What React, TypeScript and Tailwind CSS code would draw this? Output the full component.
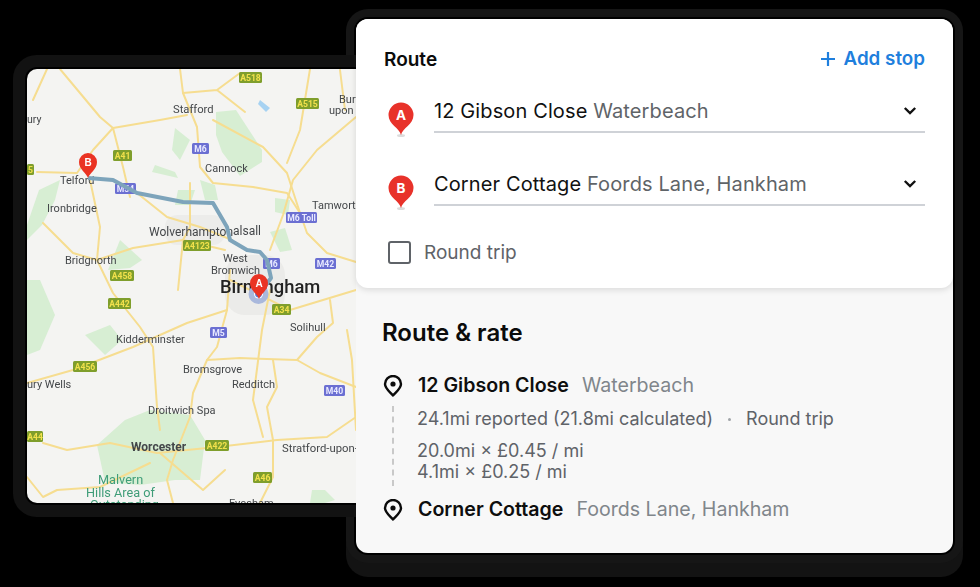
import React from "react";

const roads = [
  "M60 69 L80 93 L100 117 L113 128 L160 120 L187 115",
  "M180 69 L183 93 L197 127 L200 167 L213 183 L253 187 L287 193 L300 213 L307 233 L327 253 L356 262",
  "M37 172 L77 173 L93 150 L113 128 L123 167 L130 197",
  "M137 193 L167 217 L200 227 L232 240",
  "M190 183 L190 227 L183 240 L178 290",
  "M217 90 L240 73 M183 93 L217 90 L245 112 M213 120 L263 147 L287 173 L300 213",
  "M310 69 L300 130 L287 163 M356 117 L317 150 L293 180 L283 215 L270 250",
  "M90 180 L100 227 L97 260 L113 293 L140 327 L153 347 L157 407 L160 430",
  "M43 223 L73 253 L97 260 L133 248 L183 240 L225 250",
  "M27 383 L73 370 L133 347 L187 323 L227 310 L230 270",
  "M207 360 L217 347 L227 310 M207 360 L240 358 L297 360 L320 373 L356 387",
  "M207 360 L193 393 L190 417 L173 460 L167 480 L173 503",
  "M43 443 L67 450 L110 443 L157 453 L217 447 L277 440 L327 437 L356 417",
  "M273 360 L277 387 L267 407 L273 440 L273 477 L260 503",
  "M253 400 L263 437",
  "M330 300 L333 323 L317 337 L297 360",
  "M27 477 L43 497 L57 490 L100 487 L150 463",
  "M230 280 L290 310 L356 290 M270 290 L262 330 L253 400",
  "M340 70 L345 110 M356 430 L352 360 L347 330",
  "M47 69 L33 100 M160 453 L203 490 L225 470",
];

const greens = [
  "M216 112 L236 110 L262 150 L262 162 L240 176 L222 152 L216 135 Z",
  "M120 240 L142 260 L130 268 L108 270 Z",
  "M175 128 L190 140 L180 160 L172 150 Z",
  "M155 165 L175 172 L178 178 L152 172 Z",
  "M27 280 L40 280 L55 315 L40 350 L27 355 Z",
  "M97 445 L125 420 L150 410 L190 415 L205 440 L200 480 L175 480 L140 485 L105 482 Z",
  "M85 335 L110 325 L122 340 L105 355 Z",
  "M39 190 L60 180 L55 200 L42 225 L27 240 L27 225 Z",
  "M178 190 L195 190 L190 205 L175 205 Z",
  "M200 180 L215 185 L218 200 L205 200 Z",
  "M275 198 L290 200 L288 215 L275 212 Z",
  "M312 490 L325 490 L335 500 L325 503 L310 503 Z",
  "M270 232 L285 228 L292 250 L280 252 Z",
];

const cities: [string, number, number, number, number?][] = [
  ["ury", 27, 123, 10.5],
  ["Stafford", 173, 113, 11.2],
  ["Burt", 339, 103, 11],
  ["upon", 329, 114, 11],
  ["Cannock", 205, 172, 11],
  ["Telford", 60, 184, 11],
  ["Ironbridge", 47, 212, 11],
  ["Tamwort", 312, 209, 11],
  ["Wolverhampton", 149, 236, 12],
  ["alsall", 233, 235, 12],
  ["Bridgnorth", 65, 264, 11],
  ["West", 223, 262, 11],
  ["Bromwich", 211, 274, 11],
  ["Birmingham", 220, 293, 18.4, 500],
  ["Solihull", 290, 331, 11],
  ["Kidderminster", 116, 343, 11],
  ["Bromsgrove", 183, 373, 11],
  ["Redditch", 232, 388, 11],
  ["ury Wells", 27, 388, 11],
  ["Droitwich Spa", 148, 414, 11],
  ["Worcester", 131, 451, 12, 700],
  ["Stratford-upon-", 282, 452, 11.3],
  ["Evesham", 229, 507, 11],
];

const shields: [string, number, number, number, boolean][] = [
  ["A518", 239, 72, 23, false],
  ["A515", 296, 98, 23, false],
  ["A41", 113, 150, 19, false],
  ["5", 27, 164, 7, false],
  ["M6", 192, 143, 17, true],
  ["M54", 115, 183, 21, true],
  ["M6 Toll", 286, 212, 31, true],
  ["A4123", 183, 240, 28, false],
  ["M6", 263, 258, 17, true],
  ["M42", 315, 258, 21, true],
  ["A458", 110, 270, 24, false],
  ["A442", 108, 298, 23, false],
  ["A34", 272, 304, 19, false],
  ["M5", 210, 327, 17, true],
  ["A456", 73, 361, 24, false],
  ["M40", 324, 385, 21, true],
  ["A44", 27, 431, 16, false],
  ["A422", 205, 440, 24, false],
  ["A46", 253, 472, 19, false],
];

function MapPin({ x, y, letter }: { x: number; y: number; letter: string }) {
  return (
    <g transform={`translate(${x} ${y})`}>
      <path d="M0 16 C-1.5 11 -9 7.5 -9 0 A9 9 0 0 1 9 0 C9 7.5 1.5 11 0 16 Z" fill="#ea3323" />
      <text x="0" y="3.6" textAnchor="middle" fontSize="10" fontWeight="700" fill="#fff" fontFamily="'Liberation Sans', sans-serif">
        {letter}
      </text>
    </g>
  );
}

function MapArt() {
  return (
    <svg viewBox="27 69 345 434" width="345" height="434" className="block blur-[0.4px]">
      <rect x="27" y="69" width="345" height="434" fill="#f4f4f2" />
      <rect x="225" y="255" width="60" height="60" rx="20" fill="#ebebe9" />
      <rect x="165" y="215" width="60" height="30" rx="12" fill="#ececea" />
      {greens.map((d) => (
        <path key={d} d={d} fill="#d7eed3" />
      ))}
      <path d="M260 100 L270 108 L266 112 L258 104 Z" fill="#a6d2f2" />
      {roads.map((d) => (
        <path key={d} d={d} fill="none" stroke="#f6dd90" strokeWidth="2" strokeLinejoin="round" strokeLinecap="round" />
      ))}
      {cities.map(([t, x, y, s, w]) => (
        <text key={t + x} x={x} y={y} fontSize={s} fontWeight={w ?? 400} fill={t === "Birmingham" ? "#222" : "#44474a"} fontFamily="Roboto, sans-serif">
          {t}
        </text>
      ))}
      <text fontFamily="Roboto, sans-serif" fontSize="12.7" fill="#3f9d78">
        <tspan x="98" y="484">Malvern</tspan>
        <tspan x="86" y="497">Hills Area of</tspan>
        <tspan x="90" y="509">Outstanding</tspan>
      </text>
      {shields.map(([t, x, y, w, blue]) => (
        <g key={t + x}>
          <rect x={x} y={y} width={w} height={11} rx="1.5" fill={blue ? "#6b6fd2" : "#7f9e2c"} />
          <text x={x + w / 2} y={y + 8.8} textAnchor="middle" fontSize="8.6" fontWeight="700" fill={blue ? "#e8e9ff" : "#f2e14c"} fontFamily="Roboto, sans-serif">
            {t}
          </text>
        </g>
      ))}
      <path d="M88 178 L113 180 L137 193 L183 202 L213 203 L227 227 L230 240 L247 250 L260 252 L267 260 L271 278 L259 294" fill="none" stroke="#7da4bb" strokeWidth="4" strokeLinejoin="round" />
      <circle cx="258.5" cy="294" r="10" fill="#a9b8dc" />
      <circle cx="258.5" cy="294" r="4.5" fill="#fff" />
      <circle cx="258.5" cy="294" r="3.4" fill="#4a7de0" />
      <MapPin x={88} y={162} letter="B" />
      <MapPin x={259} y={283} letter="A" />
    </svg>
  );
}

function RedPin({ letter }: { letter: string }) {
  return (
    <svg width="26" height="36" viewBox="0 0 26 36" className="shrink-0">
      <ellipse cx="13" cy="33.5" rx="4" ry="1.5" fill="#dcdcdc" />
      <path d="M13 33 C11.5 26 0.5 22.5 0.5 13 A12.5 12.5 0 0 1 25.5 13 C25.5 22.5 14.5 26 13 33 Z" fill="#e8322a" />
      <text x="13" y="18" textAnchor="middle" fontSize="13.5" fontWeight="700" fill="#fff" fontFamily="Inter, sans-serif">
        {letter}
      </text>
    </svg>
  );
}

function Chevron() {
  return (
    <svg width="14" height="10" viewBox="0 0 14 10" className="shrink-0">
      <path d="M1.8 2 L7 7 L12.2 2" fill="none" stroke="#111" strokeWidth="2.4" />
    </svg>
  );
}

function LocIcon() {
  return (
    <svg width="20" height="22" viewBox="0 0 20 22" className="shrink-0">
      <path d="M10 20.5 C7 17 2 13.5 2 9 A8 8 0 0 1 18 9 C18 13.5 13 17 10 20.5 Z" fill="none" stroke="#0b0b0b" strokeWidth="2.4" strokeLinejoin="round" />
      <circle cx="10" cy="9" r="2.6" fill="#0b0b0b" />
    </svg>
  );
}

function StopRow({ letter, name, place }: { letter: string; name: string; place: string }) {
  return (
    <div className="flex items-start">
      <div className="h-[45px] w-[50px] pl-[4px] pt-[14px]">
        <RedPin letter={letter} />
      </div>
      <div className="flex h-[45px] flex-1 items-center justify-between border-b-2 border-[#cfd2d7] pr-[8px] pt-[2px]">
        <p className="text-[20px] leading-none text-[#111] tracking-[0.12px]">
          {name} <span className="text-[#5f6468]">{place}</span>
        </p>
        <Chevron />
      </div>
    </div>
  );
}

function Stop({ name, place, gap }: { name: string; place: string; gap: string }) {
  return (
    <div className="flex items-center gap-[15px] h-[24px] pl-[1px]">
      <LocIcon />
      <p className={`flex ${gap} text-[19.6px] leading-none`}>
        <span className="font-semibold text-[#0e0e0e]">{name}</span>
        <span className="text-[#80868b]">{place}</span>
      </p>
    </div>
  );
}

export default function App() {
  return (
    <div className="flex h-[587px] w-[980px] items-start overflow-hidden bg-black font-['Inter',sans-serif]">
      <div className="relative z-[1] mt-[69px] ml-[27px] shrink-0 overflow-hidden rounded-l-[10px] shadow-[0_0_0_2px_#000,0_0_0_14px_#121212]">
        <MapArt />
      </div>
      <div className="mt-[19px] -ml-[16px] h-[534px] w-[597px] shrink-0 rounded-[12px] shadow-[0_0_0_2px_#000,0_0_0_10px_#161616,0_14px_0_10px_#131313]">
        <div className="relative z-[2] flex h-full flex-col rounded-[12px] bg-[#f8f8f8]">
          <div className="flex h-[269px] flex-col rounded-[12px] bg-white px-[28px] pt-[28px] shadow-[0_2px_6px_rgba(0,0,0,0.12)]">
            <div className="flex h-[24px] items-center justify-between">
              <h2 className="text-[19px] font-semibold leading-none text-[#0b0b0b]">Route</h2>
              <div className="flex items-center gap-[8px] text-[18.8px] font-semibold leading-none text-[#1f7fdd]">
                <svg width="16" height="16" viewBox="0 0 16 16">
                  <path d="M8 1 V15 M1 8 H15" stroke="#1f7fdd" strokeWidth="2.2" />
                </svg>
                <span>Add stop</span>
              </div>
            </div>
            <div className="mt-[17px] flex flex-col gap-[28px]">
              <StopRow letter="A" name="12 Gibson Close" place="Waterbeach" />
              <StopRow letter="B" name="Corner Cottage" place="Foords Lane, Hankham" />
            </div>
            <div className="mt-[35px] flex items-center gap-[13px] pl-[4px]">
              <div className="h-[23px] w-[23px] rounded-[3px] border-[2.5px] border-[#5f6368]" />
              <span className="text-[19px] leading-none text-[#5f6368]">Round trip</span>
            </div>
          </div>
          <div className="flex flex-col px-[26px] pt-[31px]">
            <h2 className="text-[24px] font-semibold leading-[28px] text-[#0b0b0b]">Route &amp; rate</h2>
            <div className="mt-[27px] flex flex-col">
              <Stop name="12 Gibson Close" place="Waterbeach" gap="gap-[13px]" />
              <div className="flex">
                <div className="ml-[10px] mt-[8px] h-[80px] border-l-[2.5px] border-dashed border-[#c9c9c9]" />
                <div className="ml-[23px] flex flex-col pt-[9px] text-[18px] text-[#5f6368]">
                  <p className="flex h-[24px] items-center leading-none">
                    24.1mi reported (21.8mi calculated)
                    <span className="mx-[15px] h-[3px] w-[3px] rounded-full bg-[#a0a4a8]" />
                    Round trip
                  </p>
                  <p className="mt-[9px] leading-[21px]">20.0mi × £0.45 / mi</p>
                  <p className="leading-[21px]">4.1mi × £0.25 / mi</p>
                </div>
              </div>
              <div className="mt-[12px]">
                <Stop name="Corner Cottage" place="Foords Lane, Hankham" gap="gap-[13px]" />
              </div>
            </div>
          </div>
        </div>
      </div>
    </div>
  );
}
